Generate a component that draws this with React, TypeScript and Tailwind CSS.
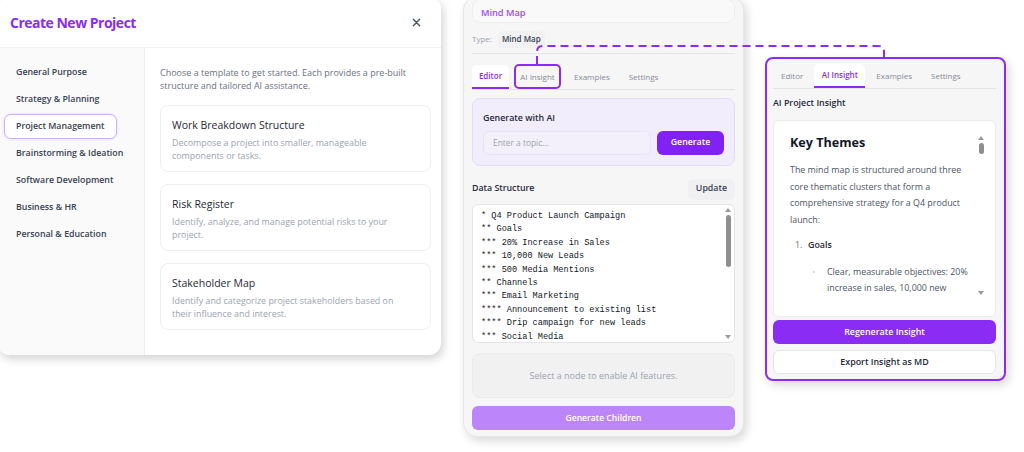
import React from 'react';

const categories = [
  'General Purpose',
  'Strategy & Planning',
  'Project Management',
  'Brainstorming & Ideation',
  'Software Development',
  'Business & HR',
  'Personal & Education',
];

const templates = [
  {
    title: 'Work Breakdown Structure',
    desc: 'Decompose a project into smaller, manageable components or tasks.',
  },
  {
    title: 'Risk Register',
    desc: 'Identify, analyze, and manage potential risks to your project.',
  },
  {
    title: 'Stakeholder Map',
    desc: 'Identify and categorize project stakeholders based on their influence and interest.',
  },
];

const outline = [
  '* Q4 Product Launch Campaign',
  '** Goals',
  '*** 20% Increase in Sales',
  '*** 10,000 New Leads',
  '*** 500 Media Mentions',
  '** Channels',
  '*** Email Marketing',
  '**** Announcement to existing list',
  '**** Drip campaign for new leads',
  '*** Social Media',
];

function ScrollTrack({ thumb }: { thumb: string }) {
  return (
    <div className="flex flex-col items-center w-[8px] h-full py-[3px]">
      <div className="w-0 h-0 border-x-[3.5px] border-x-transparent border-b-[4px] border-b-[#9a9a9a]" />
      <div className={`w-[5px] mt-[3px] rounded-full bg-[#8f8f8f] ${thumb}`} />
      <div className="flex-1" />
      <div className="w-0 h-0 border-x-[3.5px] border-x-transparent border-t-[4px] border-t-[#9a9a9a]" />
    </div>
  );
}

function CreateProjectModal() {
  return (
    <div className="absolute left-[-2px] top-[-3px] w-[443px] h-[358px] rounded-[12px] bg-white shadow-[2px_4px_10px_rgba(0,0,0,0.18)] flex flex-col overflow-hidden">
      <div className="h-[51px] shrink-0 flex items-center justify-between pl-[12px] pr-[20px] pt-[1px] border-b border-[#eeeff1]">
        <h1 className="text-[14px] font-bold text-[#8b2cf5] tracking-[-0.5px]">Create New Project</h1>
        <svg className="w-[9px] h-[9px]" viewBox="0 0 10 10" stroke="#4b5563" strokeWidth={1.6} strokeLinecap="round">
          <path d="M1.5 1.5l7 7M8.5 1.5l-7 7" />
        </svg>
      </div>
      <div className="flex flex-1 min-h-0">
        <aside className="w-[147px] shrink-0 bg-[#fafafa] border-r border-[#eeeff1] pt-[12px] flex flex-col gap-[2px]">
          {categories.map((c) => (
            <div
              key={c}
              className={`ml-[6px] w-fit h-[25px] flex items-center px-[11px] rounded-[7px] whitespace-nowrap text-[8.8px] font-semibold text-[#374151] ${
                c === 'Project Management'
                  ? 'border-[1.5px] border-[#c9b3fb] bg-white shadow-[0_0_3px_rgba(139,44,245,0.2)]'
                  : 'border-[1.5px] border-transparent'
              }`}
            >
              {c}
            </div>
          ))}
        </aside>
        <div className="flex-1 pl-[15px] pr-[10px] pt-[18px]">
          <p className="text-[9px] leading-[13px] text-[#6b7280] pr-[10px]">
            Choose a template to get started. Each provides a pre-built structure and tailored AI assistance.
          </p>
          <div className="mt-[13px] flex flex-col gap-[12px]">
            {templates.map((t) => (
              <div key={t.title} className="h-[67px] rounded-[8px] border border-[#eceef1] bg-white px-[11px] pt-[12px]">
                <div className="text-[10.5px] font-medium text-[#1f2937] leading-[14px]">{t.title}</div>
                <div className="mt-[4px] text-[8.9px] leading-[13px] text-[#9ca3af] pr-[8px]">{t.desc}</div>
              </div>
            ))}
          </div>
        </div>
      </div>
    </div>
  );
}

function MindMapPanel() {
  return (
    <div className="absolute left-[463px] top-[-4px] w-[281px] h-[441px] rounded-[14px] bg-[#f6f6f7] border border-[#e7e7ea] shadow-[3px_4px_10px_rgba(0,0,0,0.15)] flex flex-col px-[8px]">
      <div className="mt-[2px] h-[24px] rounded-[8px] bg-[#f9f9fa] border border-[#efeff1] flex items-center pl-[8px] pt-[3px]">
        <span className="text-[9.2px] font-semibold text-[#9b4cf7]">Mind Map</span>
      </div>
      <div className="h-[31px] flex items-center gap-[6px] border-b border-[#e5e5e8] pt-[2px]">
        <span className="text-[8px] text-[#9ca3af]">Type:</span>
        <span className="px-[4px] h-[17px] flex items-center rounded-[5px] bg-[#f1f1f3] text-[8px] font-semibold text-[#374151]">Mind Map</span>
      </div>
      <div className="mt-[11px] h-[25px] flex items-end border-b border-[#e3e3e6] text-[8px] font-medium text-[#868b94]">
        <div className="w-[37px] h-[24px] flex items-center justify-center bg-white rounded-t-[5px] border-b-2 border-[#8b2cf5] text-[#8b2cf5] font-semibold">Editor</div>
        <div className="ml-[5px] w-[47px] h-[25px] flex items-center justify-center rounded-[5px] border-2 border-[#8b2cf5]">AI Insight</div>
        <div className="ml-[13px] h-[24px] flex items-center">Examples</div>
        <div className="ml-[19px] h-[24px] flex items-center">Settings</div>
      </div>
      <div className="mt-[8px] h-[68px] rounded-[8px] bg-[#f1edfd] border border-[#e3dafb] px-[10px] pt-[12px]">
        <div className="text-[8.9px] font-semibold text-[#1f2937] leading-[13px]">Generate with AI</div>
        <div className="mt-[7px] flex gap-[6px]">
          <div className="flex-1 h-[24px] rounded-[6px] bg-[#f3f0fb] border border-[#e7e2f5] flex items-center pl-[9px] text-[8.4px] text-[#9ca3af]">
            Enter a topic...
          </div>
          <div className="w-[67px] h-[24px] rounded-[6px] bg-[#8121f3] flex items-center justify-center text-[8.8px] font-semibold text-white">
            Generate
          </div>
        </div>
      </div>
      <div className="mt-[12px] h-[22px] flex items-center justify-between">
        <span className="text-[8.8px] font-semibold text-[#1f2937]">Data Structure</span>
        <span className="h-[21px] px-[8px] flex items-center rounded-[6px] bg-[#f0f0f2] text-[8.8px] font-semibold text-[#374151]">Update</span>
      </div>
      <div className="mt-[4px] h-[139px] rounded-[6px] bg-white border border-[#e5e5e8] flex pl-[8px] pr-[2px] overflow-hidden">
        <pre className="flex-1 pt-[5px] font-['Liberation_Mono','DejaVu_Sans_Mono',monospace] text-[8.6px] leading-[13.4px] text-[#111827]">
          {outline.join('\n')}
        </pre>
        <ScrollTrack thumb="h-[52px]" />
      </div>
      <div className="mt-[10px] h-[45px] rounded-[8px] bg-[#f1f1f2] border border-[#ebebed] flex items-center justify-center text-[9px] text-[#9ca3af]">
        Select a node to enable AI features.
      </div>
      <div className="mt-[8px] h-[24px] rounded-[6px] bg-[#bc86fa] flex items-center justify-center text-[8.6px] font-semibold text-white">
        Generate Children
      </div>
    </div>
  );
}

function InsightPanel() {
  return (
    <div className="absolute left-[765px] top-[57px] w-[241px] h-[324px] rounded-[8px] border-2 border-[#8b2cf5] bg-[#f6f6f7] shadow-[3px_4px_10px_rgba(0,0,0,0.15)] flex flex-col pl-[6px] pr-[8px]">
      <div className="mt-[5px] h-[25px] flex items-end border-b border-[#e3e3e6] text-[8px] font-medium text-[#868b94]">
        <div className="ml-[8px] h-[24px] flex items-center">Editor</div>
        <div className="ml-[11px] w-[51px] h-[24px] flex items-center justify-center bg-white rounded-t-[5px] border-b-2 border-[#8b2cf5] text-[#8b2cf5] font-semibold">AI Insight</div>
        <div className="ml-[11px] h-[24px] flex items-center">Examples</div>
        <div className="ml-[19px] h-[24px] flex items-center">Settings</div>
      </div>
      <div className="mt-[7px] text-[8.9px] font-semibold text-[#1f2937] leading-[13px]">AI Project Insight</div>
      <div className="mt-[11px] h-[197px] rounded-[6px] bg-white border border-[#ececef] flex overflow-hidden">
        <div className="flex-1 pl-[16px] pt-[12px] pr-[8px]">
          <h2 className="text-[12.6px] font-bold text-[#111827] leading-[20px]">Key Themes</h2>
          <p className="mt-[9px] text-[8.9px] leading-[16.5px] text-[#4b5563]">
            The mind map is structured around three core thematic clusters that form a comprehensive strategy for a Q4 product launch:
          </p>
          <div className="mt-[9px] flex text-[8.9px] leading-[16.5px]">
            <span className="w-[18px] shrink-0 pl-[5px] text-[#6b7280]">1.</span>
            <span className="font-semibold text-[#1f2937]">Goals</span>
          </div>
          <div className="mt-[10px] flex text-[8.9px] leading-[16.5px] text-[#4b5563]">
            <span className="w-[37px] shrink-0 pl-[22px] text-[#d1d5db]">•</span>
            <span>Clear, measurable objectives: 20% increase in sales, 10,000 new</span>
          </div>
        </div>
        <div className="pt-[12px] pb-[18px] pr-[10px]">
          <ScrollTrack thumb="h-[11px]" />
        </div>
      </div>
      <div className="mt-[3px] h-[24px] rounded-[6px] bg-[#8b2cf5] flex items-center justify-center text-[8.9px] font-semibold text-white">
        Regenerate Insight
      </div>
      <div className="mt-[6px] h-[24px] rounded-[6px] bg-white border border-[#e5e5e8] flex items-center justify-center text-[8.9px] font-semibold text-[#1f2937]">
        Export Insight as MD
      </div>
    </div>
  );
}

export default function App() {
  return (
    <div className="relative w-[1024px] h-[452px] overflow-hidden bg-white font-['Open_Sans','Noto_Sans',sans-serif]">
      <CreateProjectModal />
      <MindMapPanel />
      <InsightPanel />
      {/* connector from the AI Insight tab to the insight panel */}
      <svg className="absolute left-0 top-0 pointer-events-none" width="1024" height="80">
        <path
          d="M537 64 V52 Q537 46 543 46 H878 Q884 46 884 52 V57"
          fill="none"
          stroke="#8b2cf5"
          strokeWidth={2}
          strokeDasharray="8 5"
        />
      </svg>
    </div>
  );
}
